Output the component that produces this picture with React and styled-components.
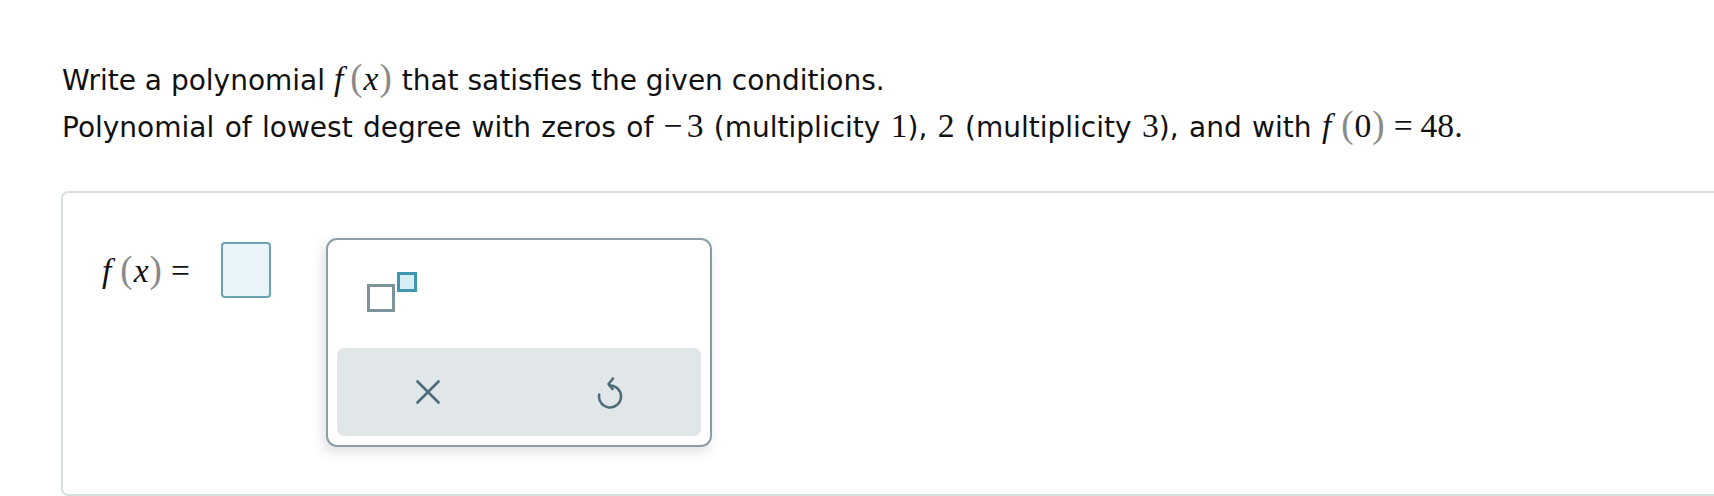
import React from 'react';
import styled, { createGlobalStyle } from 'styled-components';

const GlobalStyle = createGlobalStyle`
  html, body {
    margin: 0;
    padding: 0;
    background: #ffffff;
    overflow: hidden;
  }
  body {
    font-family: "DejaVu Sans", Verdana, sans-serif;
    color: #111111;
  }
`;

const Page = styled.div`
  padding: 57px 0 0 61px;
  width: 1714px;
  height: 496px;
  box-sizing: border-box;
`;

const Prompt = styled.div`
  padding-left: 1px;
  font-size: 28px;
  line-height: 47px;
  white-space: nowrap;
`;

const Line = styled.div`
  word-spacing: ${(p) => p.$ws ?? 0}px;
`;

const Math = styled.span`
  font-family: "Liberation Serif", "Times New Roman", serif;
  font-size: 33.6px;
  line-height: 0;
  word-spacing: 0;
`;

const Var = styled.span`
  font-style: italic;
  margin-right: ${(p) => p.$after ?? 0}px;
`;

const Paren = styled.span`
  color: #8a8a8a;
  font-size: 1.1em;
  margin: 0 1px;
`;

const Op = styled.span`
  margin: 0 ${(p) => p.$m ?? 8}px;
`;

const Minus = styled.span`
  margin-right: 4px;
`;

const Card = styled.div`
  margin-top: 40px;
  margin-right: -60px;
  border: 2px solid #d8dfe3;
  border-radius: 7px;
  padding: 45px 0 47px 39px;
  display: flex;
  align-items: flex-start;
`;

const Equation = styled.div`
  display: flex;
  align-items: center;
  margin-top: 4px;
`;

const AnswerBox = styled.div`
  width: 46px;
  height: 52px;
  margin-left: 23px;
  border: 2px solid #6aa3b3;
  border-radius: 4px;
  background: #eaf5f9;
`;

const Palette = styled.div`
  margin-left: 55px;
  width: 364px;
  height: 196px;
  border: 2px solid #8b9ea7;
  border-radius: 11px;
  box-shadow: -3px 5px 12px rgba(60, 80, 90, 0.18);
  padding: 0 9px 9px;
  display: flex;
  flex-direction: column;
`;

const KeyRow = styled.div`
  height: 108px;
  display: flex;
  align-items: flex-start;
  padding: 32px 0 0 30px;
  box-sizing: border-box;
`;

const SuperKey = styled.button`
  position: relative;
  width: 52px;
  height: 42px;
  border: none;
  background: transparent;
  padding: 0;
  cursor: pointer;
`;

const BaseSquare = styled.span`
  position: absolute;
  left: 0;
  top: 12px;
  width: 28px;
  height: 28px;
  box-sizing: border-box;
  border: 3px solid #7b939d;
  background: #fff;
`;

const ExpSquare = styled.span`
  position: absolute;
  left: 30px;
  top: 0;
  width: 20px;
  height: 20px;
  box-sizing: border-box;
  border: 3px solid #3e97ae;
  background: #d4eef4;
`;

const ActionBar = styled.div`
  height: 88px;
  background: #e1e6e9;
  border-radius: 7px;
  display: flex;
`;

const ActionButton = styled.button`
  flex: 1;
  border: none;
  background: transparent;
  display: flex;
  align-items: center;
  justify-content: center;
  padding: 0;
  cursor: pointer;
  color: #4d6c79;
`;

const ClearIcon = () => (
  <svg width="24" height="24" viewBox="0 0 24 24" fill="none" stroke="currentColor" strokeWidth="2.6" strokeLinecap="round">
    <path d="M1.5 1.5 L22.5 22.5 M22.5 1.5 L1.5 22.5" />
  </svg>
);

const UndoIcon = () => (
  <svg width="26" height="33" viewBox="0 0 26 33" fill="none" stroke="currentColor" strokeWidth="2.6" strokeLinecap="round" strokeLinejoin="round">
    <path d="M12.5 9.5 A11 11 0 1 1 2.2 18.5" />
    <path d="M16 2.5 L11.5 8 L15.5 13" />
  </svg>
);

export default function App() {
  return (
    <>
      <GlobalStyle />
      <Page>
        <Prompt>
          <Line>
            Write a polynomial{' '}
            <Math>
              <Var $after={6}>f</Var>
              <Paren>(</Paren>
              <Var>x</Var>
              <Paren>)</Paren>
            </Math>{' '}
            that satisfies the given conditions.
          </Line>
          <Line $ws={1.5}>
            Polynomial of lowest degree with zeros of{' '}
            <Math>
              <Minus>−</Minus>3
            </Math>{' '}
            (multiplicity <Math>1</Math>), <Math>2</Math> (multiplicity <Math>3</Math>), and with{' '}
            <Math>
              <Var $after={9}>f</Var>
              <Paren>(</Paren>0<Paren>)</Paren>
              <Op>=</Op>48.
            </Math>
          </Line>
        </Prompt>

        <Card>
          <Equation>
            <Math>
              <Var $after={8}>f</Var>
              <Paren>(</Paren>
              <Var>x</Var>
              <Paren>)</Paren>
              <Op>=</Op>
            </Math>
            <AnswerBox />
          </Equation>

          <Palette>
            <KeyRow>
              <SuperKey aria-label="exponent">
                <BaseSquare />
                <ExpSquare />
              </SuperKey>
            </KeyRow>
            <ActionBar>
              <ActionButton aria-label="clear">
                <ClearIcon />
              </ActionButton>
              <ActionButton aria-label="undo">
                <UndoIcon />
              </ActionButton>
            </ActionBar>
          </Palette>
        </Card>
      </Page>
    </>
  );
}
